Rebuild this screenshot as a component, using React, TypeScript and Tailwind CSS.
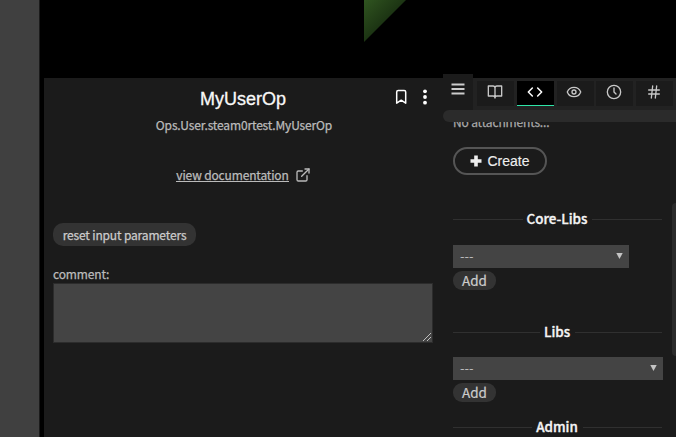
import type { ReactNode } from "react";
import { Code, ExternalLink, Eye, Hash } from "lucide-react";

function Tab({ active = false, children }: { active?: boolean; children?: ReactNode }) {
  return (
    <button
      className={`flex h-[25px] w-[37px] shrink-0 items-center justify-center ${
        active ? "border-b border-[#2ee5a8] bg-black pr-[1px] pb-[2px] text-white" : "bg-[#1b1b1b] pr-[2px] pb-[4px] text-[#c8c8c8]"
      }`}
    >
      {children}
    </button>
  );
}

function Line({ d, circle = false }: { d: string; circle?: boolean }) {
  return (
    <svg width="16" height="16" viewBox="0 0 24 24" fill="none" stroke="currentColor" strokeWidth="2" strokeLinecap="round" strokeLinejoin="round">
      {circle && <circle cx="12" cy="12" r="10" />}
      <path d={d} />
    </svg>
  );
}

function Divider({ title }: { title: string }) {
  return (
    <div className="flex h-5 w-[209px] items-center">
      <div className="h-px flex-1 bg-[#303030]" />
      <h3 className="mr-[4px] ml-[4px] pr-px pb-[2px] text-[13.4px] leading-[18px] font-medium text-[#f4f4f4] [-webkit-text-stroke:0.35px_#f4f4f4]">
        {title}
      </h3>
      <div className="h-px flex-1 bg-[#303030]" />
    </div>
  );
}

function Select({ width }: { width: string }) {
  return (
    <div className={`flex h-[23px] items-center justify-between bg-[#444] pr-[6px] pl-[7px] text-[13px] text-[#bbb] ${width}`}>
      <span className="pb-[2px]">---</span>
      <svg width="7" height="6" viewBox="0 0 7 6" className="mb-px" fill="#c4c4c4">
        <path d="M0.3 0h6.4L3.5 6z" />
      </svg>
    </div>
  );
}

function AddButton() {
  return (
    <button className="mt-[3px] flex h-[19px] w-[43px] items-center justify-center rounded-[9px] bg-[#333] text-[13.5px] text-[#ccc] [-webkit-text-stroke:0.2px_#ccc]">
      Add
    </button>
  );
}

function ParamPanel() {
  return (
    <section className="mt-1 w-[399px] shrink-0 px-[9px]">
      <header className="relative flex h-[40px] items-center justify-center">
        <h1 className="mt-[2px] mr-px font-['Liberation_Sans',sans-serif] text-[18px] text-[#f8f8f8] [-webkit-text-stroke:0.3px_#f8f8f8]">
          MyUserOp
        </h1>
        <div className="absolute top-[11px] right-px flex items-center gap-[8px] text-white">
          <svg width="16" height="16" viewBox="0 0 16 16" fill="none" stroke="currentColor" strokeWidth="1.5" strokeLinejoin="round">
            <path d="M3.7 3Q3.7 1.5 5.2 1.5H11.2Q12.7 1.5 12.7 3V14.2L8.2 11.2L3.7 14.2Z" />
          </svg>
          <svg width="16" height="16" viewBox="0 0 16 16" fill="currentColor">
            <circle cx="8" cy="2.3" r="1.9" />
            <circle cx="8" cy="8" r="1.9" />
            <circle cx="8" cy="13.7" r="1.9" />
          </svg>
        </div>
      </header>
      <p className="mt-[-3px] h-5 pl-px text-center text-[12px] leading-5 tracking-[-0.15px] text-[#bbb] [-webkit-text-stroke:0.25px_#bbb]">
        Ops.User.steam0rtest.MyUserOp
      </p>
      <div className="mt-[30px] flex h-5 items-center justify-center gap-[6px] text-[#bbb]">
        <a className="border-b border-[#bbb] text-[12px] leading-[13px] tracking-[-0.15px] [-webkit-text-stroke:0.25px_#bbb]">view documentation</a>
        <ExternalLink size={16} strokeWidth={2} />
      </div>
      <button className="mt-[38px] flex h-[23px] w-[143px] items-center justify-center rounded-[10px] bg-[#333] text-[12px] tracking-[-0.15px] text-[#ccc] [-webkit-text-stroke:0.25px_#ccc]">
        reset input parameters
      </button>
      <label className="mt-[19px] block h-[18px] text-[12px] leading-[18px] tracking-[-0.15px] text-[#bbb] [-webkit-text-stroke:0.25px_#bbb]">comment:</label>
      <div className="flex h-[60px] w-[380px] items-end justify-end border border-[#2c2c2c] bg-[#444] p-px">
        <svg width="8" height="8" viewBox="0 0 8 8" stroke="#ddd" strokeWidth="0.8">
          <path d="M0 8L8 0M4 8L8 4" />
        </svg>
      </div>
    </section>
  );
}

function SidePanel() {
  return (
    <aside className="flex w-[233px] shrink-0 flex-col overflow-hidden">
      <nav className="flex h-9 shrink-0">
        <button className="flex h-[34px] w-[30px] shrink-0 items-center justify-center bg-[#1b1b1b] pb-[4px] text-[#ccc]">
          <svg width="14" height="12" viewBox="0 0 14 12" stroke="currentColor" strokeWidth="1.8">
            <path d="M0.5 1.5H13.5M0.5 6H13.5M0.5 10.5H13.5" />
          </svg>
        </button>
        <div className="mt-1 flex h-8 flex-1 gap-[2.75px] overflow-hidden bg-[#222] pt-[3px] pl-[4px]">
          <Tab><Line d="M2 3h7a3 3 0 0 1 3 3v15a3 3 0 0 0-3-3H2zM22 3h-7a3 3 0 0 0-3 3v15a3 3 0 0 1 3-3h7z" /></Tab>
          <Tab active><Code size={16} strokeWidth={2.3} /></Tab>
          <Tab><Eye size={16} /></Tab>
          <Tab><Line circle d="M12 6v6l3 3" /></Tab>
          <Tab><Hash size={16} /></Tab>
          <Tab />
        </div>
      </nav>
      <div className="h-3 shrink-0 rounded-l-[6px] bg-[#2b2b2b]" />
      <div className="flex flex-1 justify-between overflow-hidden">
        <div className="w-[220px] pl-[10px]">
          <p className="mt-[-10px] h-5 text-[12px] leading-5 tracking-[-0.15px] text-[#aaa] [-webkit-text-stroke:0.25px_#aaa]">No attachments...</p>
          <button className="mt-[15px] flex h-[28px] w-[94px] items-center justify-center gap-[5px] rounded-full border-2 border-[#555] font-['Liberation_Sans',sans-serif] text-[14px] text-[#eee] [-webkit-text-stroke:0.15px_#eee]">
            <svg width="12" height="12" viewBox="0 0 12 12" fill="currentColor">
              <path d="M4.2 0.5h3.6v3.7h3.7v3.6h-3.7v3.7h-3.6v-3.7h-3.7v-3.6h3.7z" />
            </svg>
            Create
          </button>
          <div className="mt-[34px]"><Divider title="Core-Libs" /></div>
          <div className="mt-[16px]"><Select width="w-[176px]" /></div>
          <AddButton />
          <div className="mt-[32px]"><Divider title="Libs" /></div>
          <div className="mt-[15px]"><Select width="w-[210px]" /></div>
          <AddButton />
          <div className="mt-[15px]"><Divider title="Admin" /></div>
        </div>
        <div className="mt-[81px] h-[153px] w-1 rounded-l-[4px] bg-[#2b2b2b]" />
      </div>
    </aside>
  );
}

export default function App() {
  return (
    <main className="flex h-[437px] w-[676px] overflow-hidden bg-black font-['Noto_Sans_CJK_SC',sans-serif]">
      <div className="w-10 shrink-0 border-r border-[#1b1b1b] bg-[#404040]" />
      <div className="ml-1 flex w-[632px] flex-col">
        <div className="h-[74px] shrink-0 pl-[320px]">
          <svg width="42" height="42" viewBox="0 0 42 42">
            <defs>
              <linearGradient id="leaf" x1="0" y1="0" x2="0.5" y2="0.5">
                <stop offset="0" stopColor="#305520" />
                <stop offset="1" stopColor="#1c3413" />
              </linearGradient>
            </defs>
            <path d="M0 0H42L0 42Z" fill="url(#leaf)" />
          </svg>
        </div>
        <div className="flex flex-1 bg-[linear-gradient(#000_4px,#1b1b1b_4px)]">
          <ParamPanel />
          <SidePanel />
        </div>
      </div>
    </main>
  );
}
